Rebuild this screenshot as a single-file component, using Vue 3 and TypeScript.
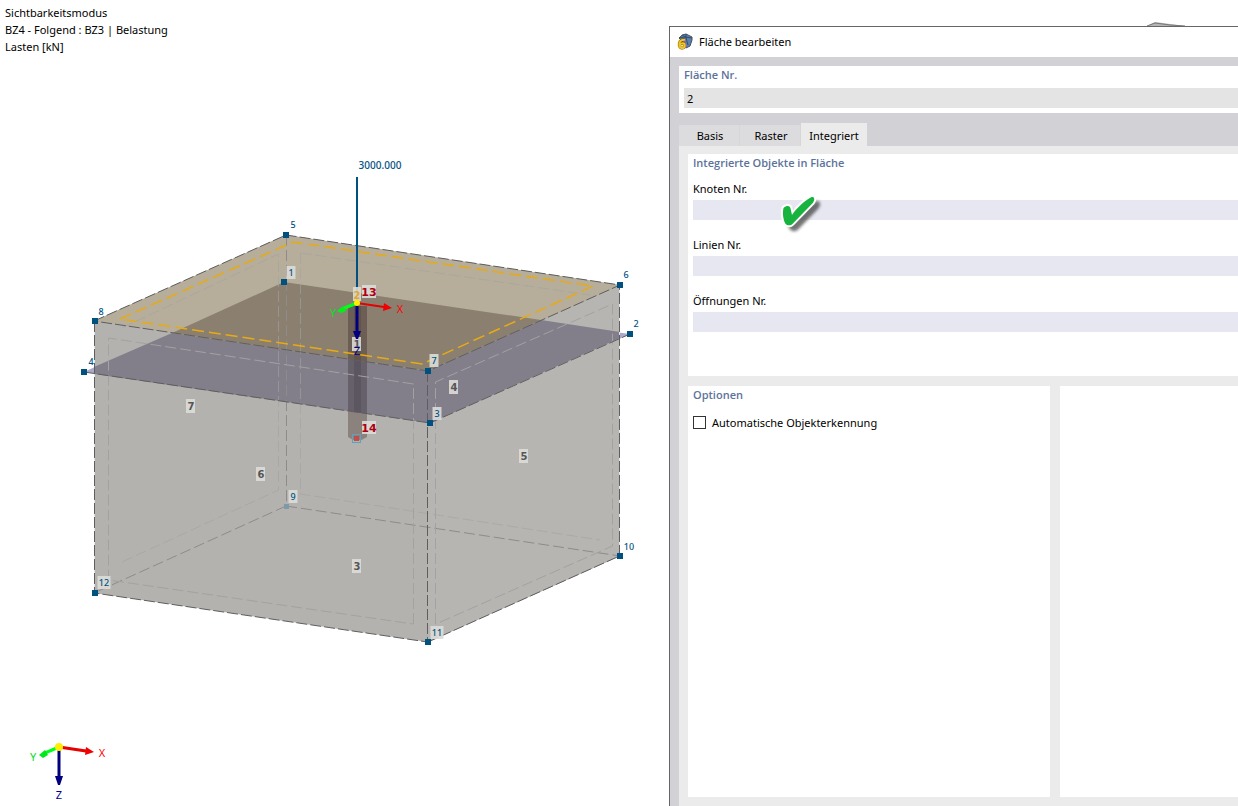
<script setup lang="ts">
import { ref } from 'vue'

interface Label { t: string; x: number; y: number; box?: boolean }

const nodes: [number, number][] = [
  [286, 235], [620, 285], [428, 371], [95, 321],
  [284, 282], [630, 334], [430, 423], [84, 372],
  [620, 556], [428, 642], [95, 593],
]

const nodeLabels: Label[] = [
  { t: '5', x: 293, y: 225 },
  { t: '6', x: 626, y: 275 },
  { t: '2', x: 636, y: 324 },
  { t: '8', x: 101, y: 312 },
  { t: '4', x: 91, y: 362 },
  { t: '1', x: 291, y: 273, box: true },
  { t: '7', x: 434, y: 361, box: true },
  { t: '3', x: 437, y: 414, box: true },
  { t: '9', x: 293, y: 497, box: true },
  { t: '10', x: 629, y: 547 },
  { t: '11', x: 437, y: 633, box: true },
  { t: '12', x: 104, y: 583, box: true },
]

const faceLabels: Label[] = [
  { t: '7', x: 191, y: 406 },
  { t: '4', x: 454, y: 387 },
  { t: '5', x: 524, y: 456 },
  { t: '6', x: 261, y: 474 },
  { t: '3', x: 357, y: 566 },
  { t: '1', x: 357, y: 344 },
]

const fields = ['Knoten Nr.', 'Linien Nr.', 'Öffnungen Nr.']
const tabs = ['Basis', 'Raster', 'Integriert']
const values = ref<string[]>(['', '', ''])
const surfaceNo = ref('2')
const active = ref('Integriert')
const autoDetect = ref(false)
const boxWidth = (l: Label): number => (l.t.length > 1 ? 13 : 9)
</script>

<template>
  <main class="workspace">
    <section class="viewport">
      <svg class="scene" viewBox="0 0 669 806" preserveAspectRatio="xMinYMin meet">
        <polygon points="84,372 110,360 110,376" fill="#aaa9cc" />
        <polygon points="600,330 630,334 600,348" fill="#aaa9cc" />
        <polygon points="94,321 286,235 620,285 620,556 428,642 94,593" fill="#b3b2ae" />
        <polygon points="428,371 620,285 620,556 428,642" fill="#b6b5b1" />
        <polygon points="94,321 286,235 620,285 428,371" fill="#b6ae9a" />
        <polygon points="94,367 172,333 428,371 541,320 620,332 620,338 430,423 94,374" fill="#827f8a" />
        <polygon points="284,282 541,320 428,371 172,333" fill="#8b8070" />

        <polygon points="348,306 367,306 367,362 348,359" fill="#6c5e54" />
        <polygon points="348,359 367,362 367,414 348,411" fill="#66606a" />
        <path d="M348 411 367 414V437Q357 444 348 437Z" fill="#8b817d" />
        <polygon points="354,306 361,306 361,361 354,360" fill="#62534d" />
        <polygon points="354,360 361,361 361,413 354,412" fill="#5c5661" />
        <rect x="352.5" y="434.5" width="8" height="8" fill="none" stroke="#62a1bd" />
        <rect x="354" y="436" width="5" height="5" fill="#c04f4a" />

        <g class="hidden-edges">
          <path d="M286.5 235V506" />
          <path d="M286 506 94 593M286 506 620 556" />
        </g>
        <g class="offsets">
          <path d="M413.5 624V384L108.5 338V580L413 624" />
          <path d="M435.5 624V382L612.5 304V546L436 624" />
          <path d="M122 328 278.5 254V490L122 562" class="faint" />
          <path d="M300.5 253 590 295M300.5 253V494L600 540" class="faint" />
        </g>
        <path d="M120 319 293 242 593 286 422 364Z" class="selected" />
        <path d="M94.5 321V593M619.5 285V556" class="halo" />
        <g class="edges">
          <path d="M94 321 286 235 620 285 428 371Z" />
          <path d="M94.5 321V593L427.5 642" />
          <path d="M427.5 371V642" />
          <path d="M428 642 619.5 556V285" />
          <path d="M84 372 430 423 630 334" />
        </g>

        <rect v-for="(n, i) in nodes" :key="i" :x="n[0] - 3" :y="n[1] - 3" width="6" height="6" fill="#00517f" />
        <rect x="284" y="504" width="5" height="5" fill="#7e9aa8" />

        <g v-for="(l, i) in nodeLabels" :key="'n' + i">
          <rect v-if="l.box" :x="l.x - boxWidth(l) / 2" :y="l.y - 7" :width="boxWidth(l)" height="13" class="tag" />
          <text :x="l.x" :y="l.y + 3" class="node">{{ l.t }}</text>
        </g>
        <g v-for="(l, i) in faceLabels" :key="'f' + i">
          <rect :x="l.x - 5" :y="l.y - 7" width="9" height="14" class="tag" />
          <text :x="l.x" :y="l.y + 4" class="face">{{ l.t }}</text>
        </g>

        <path d="M357 177V302" stroke="#00517f" stroke-width="2" />
        <text x="380" y="169" class="load">3000.000</text>
        <rect x="353" y="287" width="8" height="14" class="tag" />
        <text x="357" y="299" class="face gold">2</text>
        <rect x="362" y="285" width="14" height="13" class="tag" />
        <text x="369" y="296" class="member">13</text>
        <rect x="362" y="421" width="14" height="13" class="tag" />
        <text x="369" y="432" class="member">14</text>

        <g>
          <path d="M357 303V333" stroke="#00007e" stroke-width="3" />
          <path d="M353 331H361L358 339H356Z" fill="#00007e" />
          <path d="M357 303 342 309" stroke="#00ff18" stroke-width="3" />
          <path d="M337 311 343 306 346 311 341 313Z" fill="#00f018" />
          <path d="M357 303 384 307" stroke="#e60000" stroke-width="2" />
          <path d="M384 303 392 308 383 311Z" fill="#f00000" />
          <circle cx="357" cy="303" r="3" fill="#ffee00" />
          <text x="400" y="313" class="axis" fill="#ff0000">X</text>
          <text x="333" y="317" class="axis" fill="#00e020">Y</text>
          <text x="357" y="355" class="axis" fill="#00008c">Z</text>
        </g>
        <g>
          <path d="M59 747V778" stroke="#00007e" stroke-width="3" />
          <path d="M55 776H63L60 785H58Z" fill="#00007e" />
          <path d="M59 747 45 753" stroke="#00ff18" stroke-width="3" />
          <path d="M39 755 45 750 48 755 43 758Z" fill="#00e81c" />
          <path d="M59 747 86 751" stroke="#e60000" stroke-width="3" />
          <path d="M86 747 94 752 85 755Z" fill="#f00000" />
          <circle cx="59" cy="747" r="4" fill="#ffee00" />
          <text x="102" y="757" class="axis" fill="#ff0000">X</text>
          <text x="33" y="761" class="axis" fill="#00e020">Y</text>
          <text x="59" y="799" class="axis" fill="#00008c">Z</text>
        </g>
      </svg>
      <div class="status">
        <div>Sichtbarkeitsmodus</div>
        <div>BZ4 - Folgend : BZ3 | Belastung</div>
        <div>Lasten [kN]</div>
      </div>
    </section>

    <section class="side">
      <div class="strip">
        <svg width="38" height="4" viewBox="0 0 38 4"><path d="M0 4 8 0 23 2 38 4Z" fill="#b5b5b5" /><path d="M0 4 8 1 23 3 38 4" fill="none" stroke="#777" /></svg>
      </div>
      <div class="dialog" role="dialog" aria-labelledby="dialog-title">
        <header class="titlebar">
          <svg class="app-icon" width="16" height="18" viewBox="0 0 16 18">
            <path d="M2 5Q5 1 9 1L15 4V7L13 13 9 15 5 8Z" fill="#5c80ae" stroke="#47515c" />
            <path d="M2 5 8 4 15 5M9 1V5L11 12M5 2 10 5" fill="none" stroke="#334c70" />
            <text x="1" y="16" class="logo">6</text>
          </svg>
          <h1 id="dialog-title">Fläche bearbeiten</h1>
        </header>
        <div class="content">
          <div class="number">
            <label class="heading" for="surface">Fläche Nr.</label>
            <input id="surface" v-model="surfaceNo" readonly>
          </div>
          <nav class="tabs" role="tablist">
            <button
              v-for="t in tabs" :key="t" type="button" role="tab"
              :aria-selected="active === t" :class="{ active: active === t }" @click="active = t"
            >{{ t }}</button>
          </nav>
          <div class="panel">
            <section class="group objects">
              <h2 class="heading">Integrierte Objekte in Fläche</h2>
              <div v-for="(f, i) in fields" :key="f" class="field">
                <label :for="'field' + i">{{ f }}</label>
                <input :id="'field' + i" v-model="values[i]">
                <svg v-if="i === 0" class="check" width="44" height="42" viewBox="0 0 132 126">
                  <defs><filter id="soft"><feGaussianBlur stdDeviation="4" /></filter></defs>
                  <path d="M20 44C30 36 40 38 41 48L45 66C57 47 87 19 104 12C114 10 113 22 108 29L47 92C40 100 28 98 24 90C18 76 16 56 20 44Z" transform="translate(15 15)" fill="#444" stroke="#444" stroke-width="5" opacity=".75" filter="url(#soft)" />
                  <path d="M20 44C30 36 40 38 41 48L45 66C57 47 87 19 104 12C114 10 113 22 108 29L47 92C40 100 28 98 24 90C18 76 16 56 20 44Z" fill="#16b33e" stroke="#fff" stroke-width="12" stroke-linejoin="round" paint-order="stroke" />
                </svg>
              </div>
            </section>
            <div class="columns">
              <section class="group options">
                <h2 class="heading">Optionen</h2>
                <label class="tick"><input v-model="autoDetect" type="checkbox"><span>Automatische Objekterkennung</span></label>
              </section>
              <section class="group" />
            </div>
          </div>
        </div>
      </div>
    </section>
  </main>
</template>

<style>
body { margin: 0; background: #fff; }
</style>

<style scoped>
* { box-sizing: border-box; }
.workspace {
  display: grid;
  grid-template-columns: 669fr 569fr;
  height: 100vh;
  overflow: hidden;
  background: #fff;
  color: #000;
  font: 11px/17px "Noto Sans", "Open Sans", sans-serif;
}
.viewport { position: relative; min-width: 0; overflow: hidden; }
.scene { display: block; width: 100%; }
.status { position: absolute; top: 4px; left: 5px; white-space: nowrap; }
.edges path { fill: none; stroke: #5f5e5f; stroke-dasharray: 11 3; }
.hidden-edges path { fill: none; stroke: #8d8c8a; stroke-dasharray: 11 4; }
.offsets path { fill: none; stroke: #a2a2a4; stroke-dasharray: 11 4; }
.offsets .faint { opacity: .6; }
.selected { fill: none; stroke: #e8aa14; stroke-width: 1.5; stroke-dasharray: 12 5; }
.halo { fill: none; stroke: #e8e8e8; }
.tag { fill: #dcdcd8; opacity: .9; }
text { text-anchor: middle; }
.node { fill: #00517f; font-size: 9px; font-weight: 500; }
.face { fill: #555; font: bold 10px "DejaVu Sans", sans-serif; }
.face.gold { fill: #e6a81c; }
.member { fill: #ad0010; font: bold 11px "DejaVu Sans", sans-serif; }
.load { fill: #00517f; font-size: 10px; font-weight: 500; }
.axis { font-size: 11px; }
.logo { fill: #f5c51c; stroke: #6e5a14; stroke-width: 1px; paint-order: stroke; font: bold 14px "Open Sans", sans-serif; text-anchor: start; }

.side { display: flex; flex-direction: column; min-width: 0; }
.strip { display: flex; align-items: flex-end; height: 26px; padding-left: 84%; }
.dialog { display: flex; flex: 1; flex-direction: column; border: solid #66666a; border-width: 1px 0 0 1px; background: #d1d1d6; }
.titlebar { display: flex; align-items: center; gap: 6px; height: 30px; padding-left: 7px; background: #fff; }
.app-icon { overflow: visible; }
h1, h2 { margin: 0; font-size: 11px; line-height: 16px; }
h1 { font-weight: 400; }
.heading { display: block; color: #5b739c; font-family: "Open Sans", "Noto Sans", sans-serif; font-weight: 600; line-height: 16px; }
.content { display: flex; flex: 1; flex-direction: column; padding: 9px 0 0 9px; }
.number { height: 47px; padding: 1px 0 5px 5px; background: #fff; }
input { display: block; width: 100%; height: 20px; margin: 0; padding: 0 3px; border: 0; border-radius: 0; outline: 0; background: #e6e7f1; color: #000; font: inherit; }
.number input { margin-top: 5px; background: #e4e4e4; }
.tabs { display: flex; align-items: flex-end; height: 33px; padding-top: 10px; }
.tabs button { width: 61px; height: 21px; padding: 0 0 0 2px; border: 0; border-right: 1px solid #d6d6d8; background: #dcdcde; color: #000; font: inherit; }
.tabs .active { width: 66px; height: 23px; padding: 2px 0 0; border: 0; background: #ebebeb; }
.panel { display: flex; flex: 1; flex-direction: column; gap: 10px; padding: 8px 0 9px 9px; background: #ebebeb; }
.group { min-width: 0; padding-left: 5px; background: #fff; }
.objects { height: 222px; padding-top: 1px; }
.field { position: relative; margin-top: 9px; padding-bottom: 11px; }
.field label { display: block; height: 20px; line-height: 18px; }
.field + .field { margin-top: 5px; }
.field input { height: 20px; }
.check { position: absolute; top: 13px; left: 84px; overflow: visible; }
.columns { display: grid; flex: 1; grid-template-columns: 362fr 178fr; gap: 10px; }
.options { padding-top: 1px; }
.tick { display: flex; align-items: center; gap: 6px; margin-top: 11px; }
.tick input { flex: none; width: 13px; height: 13px; padding: 0; border: 1px solid #333; background: #fff; appearance: none; }
.tick input:checked { box-shadow: inset 0 0 0 3px #fff; background: #333; }
</style>
